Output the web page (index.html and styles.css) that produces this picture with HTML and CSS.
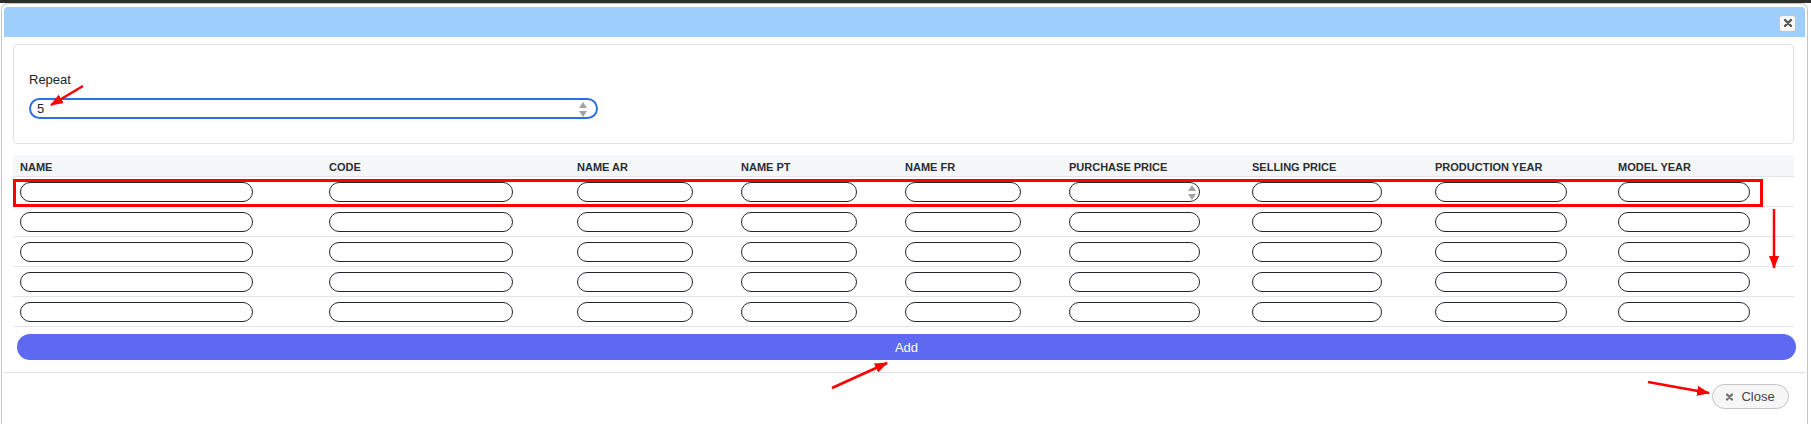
FILE: index.html
```html
<!DOCTYPE html>
<html lang="en">
<head>
  <meta charset="UTF-8" />
  <meta name="viewport" content="width=device-width, initial-scale=1.0"/>
  <title>Add items</title>
  <link rel="stylesheet" href="styles.css">
</head>
<body>

  <div class="topbar"></div>

  <div class="dialog">
    <div class="dialog-title">
      <button class="title-close" title="Close">
        <svg width="8" height="8" viewBox="0 0 8 8"><path d="M1 1L7 7M7 1L1 7" stroke="#555" stroke-width="2.4" stroke-linecap="round"/></svg>
      </button>
    </div>

    <div class="dialog-body">
      <div class="card">
        <label class="field-label" for="repeat">Repeat</label>
        <div class="spin-wrap">
          <input type="number" id="repeat" class="repeat-input" value="5" />
          <span class="spin spin-lg"></span>
        </div>
      </div>

      <table class="items">
        <colgroup>
          <col class="c-name">
          <col class="c-code">
          <col class="c-lang">
          <col class="c-lang">
          <col class="c-lang">
          <col class="c-price">
          <col class="c-price">
          <col class="c-year">
          <col class="c-year">
        </colgroup>
        <thead>
          <tr>
            <th>NAME</th>
            <th>CODE</th>
            <th>NAME AR</th>
            <th>NAME PT</th>
            <th>NAME FR</th>
            <th>PURCHASE PRICE</th>
            <th>SELLING PRICE</th>
            <th>PRODUCTION YEAR</th>
            <th>MODEL YEAR</th>
          </tr>
        </thead>
        <tbody>
          <tr>
            <td><input type="text" /></td>
            <td><input type="text" /></td>
            <td><input type="text" /></td>
            <td><input type="text" /></td>
            <td><input type="text" /></td>
            <td><div class="spin-wrap"><input type="number" /><span class="spin"></span></div></td>
            <td><input type="number" /></td>
            <td><input type="number" /></td>
            <td><input type="number" /></td>
          </tr>
          <tr>
            <td><input type="text" /></td>
            <td><input type="text" /></td>
            <td><input type="text" /></td>
            <td><input type="text" /></td>
            <td><input type="text" /></td>
            <td><input type="number" /></td>
            <td><input type="number" /></td>
            <td><input type="number" /></td>
            <td><input type="number" /></td>
          </tr>
          <tr>
            <td><input type="text" /></td>
            <td><input type="text" /></td>
            <td><input type="text" /></td>
            <td><input type="text" /></td>
            <td><input type="text" /></td>
            <td><input type="number" /></td>
            <td><input type="number" /></td>
            <td><input type="number" /></td>
            <td><input type="number" /></td>
          </tr>
          <tr>
            <td><input type="text" /></td>
            <td><input type="text" /></td>
            <td><input type="text" /></td>
            <td><input type="text" /></td>
            <td><input type="text" /></td>
            <td><input type="number" /></td>
            <td><input type="number" /></td>
            <td><input type="number" /></td>
            <td><input type="number" /></td>
          </tr>
          <tr>
            <td><input type="text" /></td>
            <td><input type="text" /></td>
            <td><input type="text" /></td>
            <td><input type="text" /></td>
            <td><input type="text" /></td>
            <td><input type="number" /></td>
            <td><input type="number" /></td>
            <td><input type="number" /></td>
            <td><input type="number" /></td>
          </tr>
        </tbody>
      </table>

      <button class="add-btn">Add</button>
    </div>

    <div class="dialog-footer">
      <button class="close-btn">
        <svg width="7" height="8" viewBox="0 0 7 8"><path d="M1 1.5L6 6.5M6 1.5L1 6.5" stroke="#6f6f6f" stroke-width="2.2" stroke-linecap="round"/></svg>
        Close
      </button>
    </div>
  </div>

  <!-- red markup drawn over the dialog -->
  <svg class="notes" width="1811" height="424" viewBox="0 0 1811 424">
    <defs>
      <marker id="head" markerWidth="13" markerHeight="10" refX="12" refY="5" orient="auto" markerUnits="userSpaceOnUse">
        <path d="M0 0L13 5L0 10z" fill="#f00"/>
      </marker>
    </defs>
    <rect x="14.5" y="180.5" width="1747" height="25" fill="none" stroke="#f00" stroke-width="3"/>
    <line x1="83" y1="86" x2="51" y2="105" stroke="#f00" stroke-width="2.5" marker-end="url(#head)"/>
    <line x1="1774" y1="209" x2="1774" y2="268" stroke="#f00" stroke-width="2.5" marker-end="url(#head)"/>
    <line x1="832" y1="388" x2="887" y2="363" stroke="#f00" stroke-width="2.5" marker-end="url(#head)"/>
    <line x1="1648" y1="382" x2="1709" y2="393" stroke="#f00" stroke-width="2.5" marker-end="url(#head)"/>
  </svg>

</body>
</html>
```

FILE: styles.css
```css
body {
  margin: 0;
  font-family: 'Liberation Sans', Arial, sans-serif;
  font-size: 13px;
  color: #212529;
  background-color: #fff;
  position: relative;
  overflow: hidden;
}

.topbar {
  height: 3px;
  background-color: #2d2d2d;
}

.dialog {
  margin-left: 1px;
  width: 1807px;
  box-sizing: border-box;
  border: 1px solid #c5c5c5;
  border-bottom: none;
  border-radius: 7px 7px 0 0;
  padding: 3px 2px 0;
  background-color: #fff;
}

.dialog-title {
  height: 30px;
  background-color: #9dcefc;
  border-radius: 4px 4px 0 0;
  display: flex;
  align-items: center;
  justify-content: flex-end;
  padding-right: 9px;
}

.title-close {
  width: 17px;
  height: 17px;
  padding: 0;
  margin-top: 2px;
  border: 1px solid #c5c5c5;
  border-radius: 3px;
  background-color: #f6f6f6;
  display: flex;
  align-items: center;
  justify-content: center;
}

.dialog-body {
  padding: 7px 11px 12px 9px;
}

.card {
  border: 1px solid #dfe3e8;
  border-radius: 4px;
  padding: 27px 15px 24px;
}

.field-label {
  display: block;
  line-height: 15px;
  margin-bottom: 11px;
}

.spin-wrap {
  position: relative;
  display: inline-block;
}

.repeat-input {
  display: block;
  width: 569px;
  height: 21px;
  box-sizing: border-box;
  border: 2px solid #2f6fe4;
  border-radius: 11px;
  padding: 0 6px;
  font: 13px 'Liberation Sans', Arial, sans-serif;
  color: #212529;
  outline: none;
}

/* number spinner arrows */
.spin {
  position: absolute;
  right: 3px;
  top: 2px;
  width: 9px;
  height: 16px;
}

.spin::before,
.spin::after {
  content: "";
  position: absolute;
  left: 0;
  border-left: 4.5px solid transparent;
  border-right: 4.5px solid transparent;
}

.spin::before {
  top: 1px;
  border-bottom: 6px solid #a3a3a3;
}

.spin::after {
  bottom: 0;
  border-top: 6px solid #a3a3a3;
}

.spin-lg {
  right: 10px;
  top: 3px;
}

.items {
  margin-top: 11px;
  width: 1780px;
  table-layout: fixed;
  border-collapse: collapse;
}

.c-name { width: 309px; }
.c-code { width: 248px; }
.c-lang { width: 164px; }
.c-price { width: 183px; }
.c-year { width: 183px; }

.items th {
  background-color: #f6f7f9;
  border-bottom: 1px solid #e2e5e9;
  text-align: left;
  font-size: 11px;
  font-weight: bold;
  line-height: 13px;
  padding: 6px 7px 2px;
  color: #2a2d33;
  white-space: nowrap;
}

.items td {
  padding: 5px 7px 4px;
  border-bottom: 1px solid #e2e5e9;
}

.items input {
  display: block;
  height: 20px;
  box-sizing: border-box;
  border: 1px solid #23272e;
  border-radius: 10px;
  padding: 0 8px;
  background-color: #fff;
  font: 12px 'Liberation Sans', Arial, sans-serif;
}

.items td:nth-child(1) input { width: 233px; }
.items td:nth-child(2) input { width: 184px; }
.items td:nth-child(3) input,
.items td:nth-child(4) input,
.items td:nth-child(5) input { width: 116px; }
.items td:nth-child(6) input { width: 131px; }
.items td:nth-child(7) input { width: 130px; }
.items td:nth-child(8) input,
.items td:nth-child(9) input { width: 132px; }

.add-btn {
  display: block;
  margin: 7px 0 0 4px;
  width: calc(100% - 2px);
  height: 26px;
  border: none;
  border-radius: 13px;
  background-color: #5c69f0;
  color: #fff;
  font: 13px 'Liberation Sans', Arial, sans-serif;
}

.dialog-footer {
  border-top: 1px solid #dddddd;
  padding: 11px 16px 20px;
  display: flex;
  justify-content: flex-end;
}

.close-btn {
  height: 25px;
  width: 77px;
  border: 1px solid #c5c5c5;
  border-radius: 13px;
  background-color: #f6f6f6;
  color: #454545;
  font: 13px 'Liberation Sans', Arial, sans-serif;
  display: flex;
  align-items: center;
  justify-content: center;
  gap: 8px;
  padding: 0;
}

.notes {
  position: absolute;
  top: 0;
  left: 0;
  pointer-events: none;
}
```
